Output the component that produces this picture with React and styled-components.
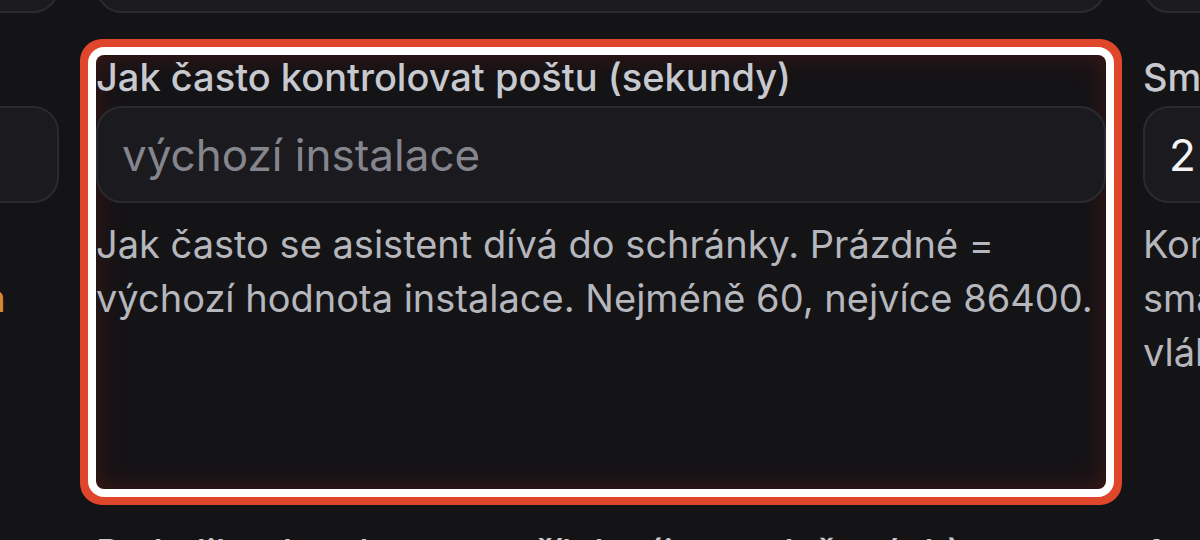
import styled, { createGlobalStyle } from "styled-components";

const Global = createGlobalStyle`
  html, body {
    margin: 0;
    padding: 0;
    background: #141316;
    overflow: hidden;
  }
  body {
    font-family: Inter, "Noto Sans", sans-serif;
    width: 1200px;
    height: 540px;
  }
`;

const Grid = styled.div`
  display: grid;
  grid-template-columns: repeat(3, 1010px);
  grid-template-rows: 98px 434px auto;
  column-gap: 37px;
  row-gap: 41px;
  margin-left: -951px;
  margin-top: -84px;
`;

const Field = styled.div`
  display: flex;
  flex-direction: column;
  min-width: 0;
  border-radius: 8px;
  box-shadow: ${(p) =>
    p.$focus
      ? "0 0 0 8px #ffffff, 0 0 0 16px #e0462b, inset 0 0 24px 2px rgba(96, 28, 20, 0.5)"
      : "none"};
`;

const Label = styled.label`
  font-size: 38px;
  line-height: 44px;
  font-weight: 500;
  color: #c7c9cf;
  white-space: nowrap;
  margin-bottom: 7px;
  padding-top: ${(p) => (p.$low ? "1px" : "0")};
`;

const Input = styled.input`
  box-sizing: border-box;
  width: 100%;
  height: 97px;
  flex-shrink: 0;
  padding: 0 24px;
  border: 2px solid #2b2a30;
  border-radius: 26px;
  background: #1b1a1f;
  color: #f3f3f5;
  font-family: inherit;
  font-size: 44px;
  outline: none;

  &::placeholder {
    color: #85868d;
  }
`;

const Hint = styled.p`
  margin: 14px 0 0;
  font-size: 38px;
  line-height: 54px;
  color: #b5b7bd;
`;

const Warn = styled.span`
  color: #d08a3c;
  white-space: nowrap;
  letter-spacing: -0.12px;
`;

export default function App() {
  return (
    <>
      <Global />
      <Grid>
        <Field>
          <Input placeholder="" />
        </Field>
        <Field>
          <Input placeholder="" />
        </Field>
        <Field>
          <Input placeholder="" />
        </Field>

        <Field>
          <Label>Maximální počet zpráv na jedno kolo</Label>
          <Input defaultValue="" />
          <Hint>
            Kolik nových zpráv se zpracuje najednou.
            <br />
            <Warn>Vyšší hodnota může zpomalit reakce celého asistenta</Warn>
          </Hint>
        </Field>
        <Field $focus>
          <Label>Jak často kontrolovat poštu (sekundy)</Label>
          <Input placeholder="výchozí instalace" />
          <Hint>
            Jak často se asistent dívá do schránky. Prázdné = výchozí hodnota
            instalace. Nejméně 60, nejvíce 86400.
          </Hint>
        </Field>
        <Field>
          <Label>Smazat vyřízené po (dnech)</Label>
          <Input defaultValue="2" />
          <Hint>
            Konverzace starší než tento počet dní se automaticky smažou, a to
            včetně všech příloh a poznámek k celému vláknu.
          </Hint>
        </Field>

        <Field>
          <Label $low>Přiložené soubory</Label>
        </Field>
        <Field>
          <Label $low>Po kolika dnech mazat přílohy (jen u uložených)</Label>
        </Field>
        <Field>
          <Label $low>Archiv</Label>
        </Field>
      </Grid>
    </>
  );
}
